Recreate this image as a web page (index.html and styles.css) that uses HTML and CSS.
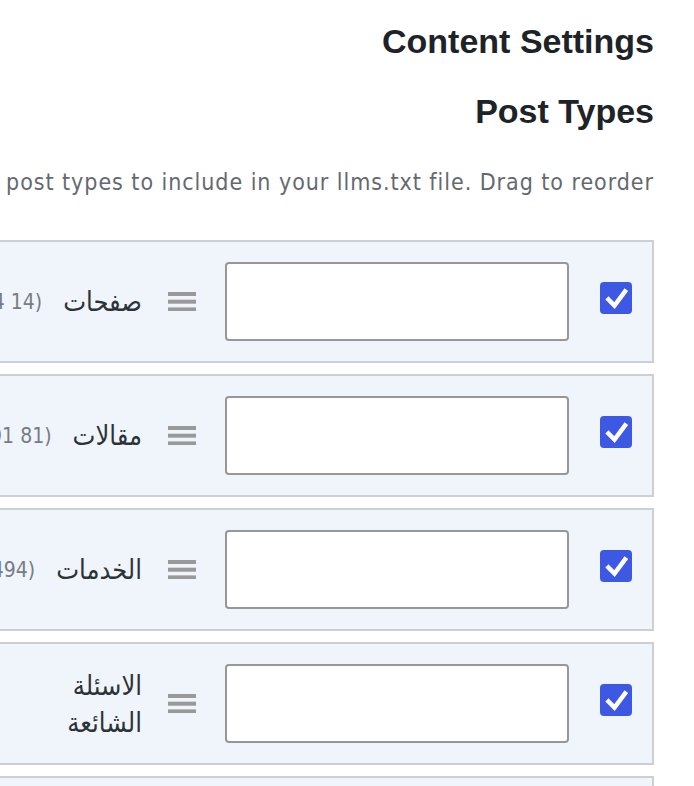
FILE: index.html
```html
<!DOCTYPE html>
<html lang="ar" dir="rtl">
<head>
<meta charset="utf-8">
<title>Content Settings</title>
<link rel="stylesheet" href="styles.css">
</head>
<body>
<div class="viewport">
  <main class="wrap">
    <h2 class="title">Content Settings</h2>
    <h3 class="subtitle">Post Types</h3>
    <p class="desc">Select the post types to include in your llms.txt file. Drag to reorder.</p>

    <ul class="types">
      <li class="type">
        <span class="check"><svg viewBox="0 0 32 32" width="32" height="32"><path d="M8.5 17.5 L14.5 23.5 L25 9.5" fill="none" stroke="#fff" stroke-width="4.5" stroke-linecap="square"/></svg></span>
        <input class="field" type="text" aria-label="description">
        <span class="handle"><svg viewBox="0 0 28 19" width="28" height="19"><rect x="0" y="0" width="28" height="4" fill="#999"/><rect x="0" y="7.7" width="28" height="4" fill="#999"/><rect x="0" y="15.4" width="28" height="3.6" fill="#999"/></svg></span>
        <span class="name">صفحات</span>
        <span class="count">(14 24)</span>
      </li>
      <li class="type">
        <span class="check"><svg viewBox="0 0 32 32" width="32" height="32"><path d="M8.5 17.5 L14.5 23.5 L25 9.5" fill="none" stroke="#fff" stroke-width="4.5" stroke-linecap="square"/></svg></span>
        <input class="field" type="text" aria-label="description">
        <span class="handle"><svg viewBox="0 0 28 19" width="28" height="19"><rect x="0" y="0" width="28" height="4" fill="#999"/><rect x="0" y="7.7" width="28" height="4" fill="#999"/><rect x="0" y="15.4" width="28" height="3.6" fill="#999"/></svg></span>
        <span class="name">مقالات</span>
        <span class="count">(81 91)</span>
      </li>
      <li class="type">
        <span class="check"><svg viewBox="0 0 32 32" width="32" height="32"><path d="M8.5 17.5 L14.5 23.5 L25 9.5" fill="none" stroke="#fff" stroke-width="4.5" stroke-linecap="square"/></svg></span>
        <input class="field" type="text" aria-label="description">
        <span class="handle"><svg viewBox="0 0 28 19" width="28" height="19"><rect x="0" y="0" width="28" height="4" fill="#999"/><rect x="0" y="7.7" width="28" height="4" fill="#999"/><rect x="0" y="15.4" width="28" height="3.6" fill="#999"/></svg></span>
        <span class="name">الخدمات</span>
        <span class="count">(494 494)</span>
      </li>
      <li class="type">
        <span class="check"><svg viewBox="0 0 32 32" width="32" height="32"><path d="M8.5 17.5 L14.5 23.5 L25 9.5" fill="none" stroke="#fff" stroke-width="4.5" stroke-linecap="square"/></svg></span>
        <input class="field" type="text" aria-label="description">
        <span class="handle"><svg viewBox="0 0 28 19" width="28" height="19"><rect x="0" y="0" width="28" height="4" fill="#999"/><rect x="0" y="7.7" width="28" height="4" fill="#999"/><rect x="0" y="15.4" width="28" height="3.6" fill="#999"/></svg></span>
        <span class="name">الاسئلة<br>الشائعة</span>
      </li>
      <li class="type">
        <span class="check"><svg viewBox="0 0 32 32" width="32" height="32"><path d="M8.5 17.5 L14.5 23.5 L25 9.5" fill="none" stroke="#fff" stroke-width="4.5" stroke-linecap="square"/></svg></span>
        <input class="field" type="text" aria-label="description">
        <span class="handle"><svg viewBox="0 0 28 19" width="28" height="19"><rect x="0" y="0" width="28" height="4" fill="#999"/><rect x="0" y="7.7" width="28" height="4" fill="#999"/><rect x="0" y="15.4" width="28" height="3.6" fill="#999"/></svg></span>
        <span class="name">المشاريع</span>
      </li>
    </ul>
  </main>
</div>
</body>
</html>
```

FILE: styles.css
```css
html, body {
  margin: 0;
  padding: 0;
  background: #ffffff;
  overflow: hidden;
}

body {
  font-family: "DejaVu Sans Condensed", "DejaVu Sans", sans-serif;
  color: #1d2327;
}

.viewport {
  width: 694px;
  height: 786px;
  overflow: hidden;
}

.wrap {
  width: 1000px;
  padding-right: 40px;
  padding-top: 22px;
}

.title,
.subtitle {
  font-family: "Liberation Sans", Arial, sans-serif;
  font-weight: 700;
  font-size: 34px;
  line-height: 39px;
  color: #1d2327;
  margin: 0;
}

.subtitle {
  margin-top: 31px;
}

.desc {
  margin: 34px 0 0;
  font-size: 23px;
  line-height: 34px;
  letter-spacing: 0.95px;
  color: #646970;
  text-align: right;
  white-space: nowrap;
}

.types {
  list-style: none;
  margin: 41px 0 0;
  padding: 0;
}

.type {
  display: flex;
  align-items: center;
  box-sizing: border-box;
  height: 123px;
  margin-bottom: 11px;
  padding: 20px 20px;
  border: 2px solid #ccd0d4;
  background: #f0f5fb;
}

.check {
  flex: none;
  width: 32px;
  height: 32px;
  border-radius: 4px;
  background: #3d58e2;
  display: flex;
  margin-bottom: 7px;
}

.check svg {
  display: block;
}

.field {
  flex: none;
  box-sizing: border-box;
  width: 344px;
  height: 79px;
  margin: 0 31px 0 0;
  padding: 0 12px;
  border: 2px solid #979797;
  border-radius: 4px;
  background: #ffffff;
  font: inherit;
}

.handle {
  flex: none;
  display: flex;
  width: 28px;
  height: 19px;
  margin-right: 29px;
}

.name {
  flex: none;
  margin-right: 26px;
  font-size: 27px;
  line-height: 37px;
  color: #2c3338;
}

.count {
  flex: none;
  margin-right: 21px;
  font-size: 21px;
  color: #787c82;
}
```
